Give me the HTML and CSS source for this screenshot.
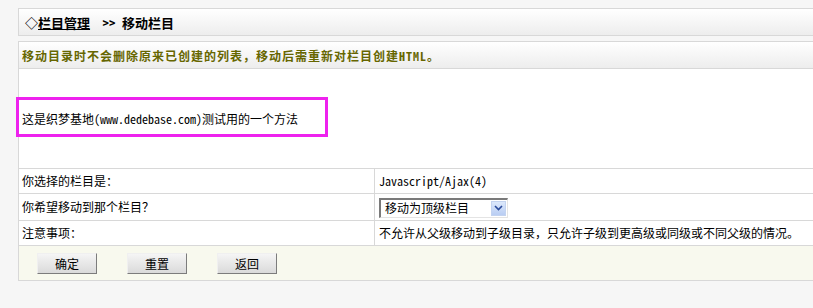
FILE: index.html
```html
<!DOCTYPE html>
<html>
<head>
    <meta charset="utf-8">
    <title>移动栏目</title>
    <link rel="stylesheet" href="styles.css">
</head>
<body>
    <div class="page">
        <div class="bar title">
            <b>◇<u>栏目管理</u> &gt;&gt; 移动栏目</b>
        </div>
        <div class="bar notice">
            <b>移动目录时不会删除原来已创建的列表，移动后需重新对栏目创建HTML。</b>
        </div>
        <table class="form">
            <tr>
                <td colspan="2" class="intro">
                    这是织梦基地(www.dedebase.com)测试用的一个方法
                    <span class="mark"></span>
                </td>
            </tr>
            <tr class="row-a">
                <td class="label">你选择的栏目是：</td>
                <td class="value">Javascript/Ajax(4)</td>
            </tr>
            <tr class="row-b">
                <td class="label">你希望移动到那个栏目？</td>
                <td class="value">
                    <div class="select">
                        <span class="select-text">移动为顶级栏目</span>
                        <span class="select-arrow">
                            <svg width="9" height="6" viewBox="0 0 9 6"><path d="M1 1 L4.5 4.5 L8 1" fill="none" stroke="#2a4a9a" stroke-width="1.6"/></svg>
                        </span>
                    </div>
                </td>
            </tr>
            <tr class="row-a">
                <td class="label">注意事项：</td>
                <td class="value">不允许从父级移动到子级目录，只允许子级到更高级或同级或不同父级的情况。</td>
            </tr>
            <tr>
                <td colspan="2" class="actions">
                    <div class="buttons">
                        <button type="button">确定</button>
                        <button type="button">重置</button>
                        <button type="button">返回</button>
                    </div>
                </td>
            </tr>
        </table>
    </div>
</body>
</html>
```

FILE: styles.css
```css
html, body {
    overflow: hidden;
}
body {
    margin: 0;
    background: #f6f6f6;
    font-family: "Noto Sans Mono CJK SC", "Noto Sans CJK SC", sans-serif;
    font-size: 12px;
    color: #000000;
}
.page {
    margin: 8px 0 0 18px;
    width: 830px;
}
.bar {
    box-sizing: border-box;
    height: 28px;
    border: 1px solid #d8d8d8;
    background: linear-gradient(#ffffff, #ededed);
    display: flex;
    align-items: center;
    padding-left: 6px;
}
.title {
    font-size: 13px;
    padding-left: 6px;
}
.title u {
    margin-right: 6px;
}
.notice {
    margin-top: 5px;
    padding-left: 3px;
    color: #666600;
    letter-spacing: 1px;
}
.form {
    width: 100%;
    border-collapse: collapse;
    background: #ffffff;
    font-size: 12px;
    line-height: 16px;
}
.form td {
    border: 1px solid #d8d8d8;
    padding: 0 0 0 3px;
}
.form tr:first-child td {
    border-top: none;
}
.intro {
    position: relative;
    height: 99px;
}
.mark {
    position: absolute;
    left: -3px;
    top: 28px;
    width: 306px;
    height: 34px;
    border: 3px solid #ee22ee;
}
.row-a td {
    height: 24px;
}
.row-b td {
    height: 26px;
}
.label {
    width: 352px;
}
.value {
    padding-left: 4px !important;
}
.select {
    box-sizing: border-box;
    width: 129px;
    height: 20px;
    margin-top: 1px;
    border-top: 2px solid #7a7a7a;
    border-left: 2px solid #7a7a7a;
    border-right: 1px solid #e4e4e4;
    border-bottom: 1px solid #e4e4e4;
    background: #ffffff;
    display: flex;
    align-items: center;
    justify-content: space-between;
    padding-left: 4px;
}
.select-arrow {
    width: 15px;
    height: 15px;
    margin-right: 1px;
    background: linear-gradient(#dce8fb, #b9cdf3);
    border: 1px solid #c3d3f0;
    box-sizing: border-box;
    display: flex;
    align-items: center;
    justify-content: center;
}
.actions {
    height: 34px;
    background: #f8f9ee;
}
.buttons {
    display: flex;
    gap: 30px;
    padding-left: 15px;
}
.buttons button {
    width: 60px;
    height: 21px;
    padding: 0;
    font-family: "Noto Sans CJK SC", sans-serif;
    font-size: 12px;
    color: #000000;
    background: linear-gradient(#f5f5f5, #dadada);
    border: 1px solid;
    border-color: #f0f0f0 #7c7c7c #7c7c7c #f0f0f0;
}
```
